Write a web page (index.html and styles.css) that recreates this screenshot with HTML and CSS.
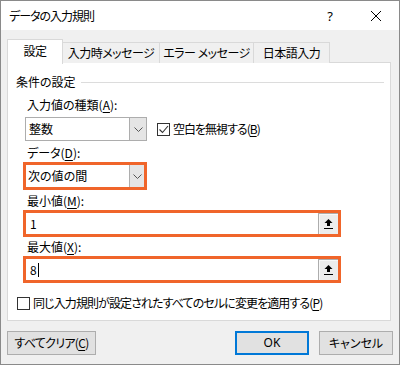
FILE: index.html
```html
<!DOCTYPE html>
<html lang="ja">
<head>
<meta charset="utf-8">
<link rel="stylesheet" href="styles.css">
</head>
<body>
<div class="dlg">
  <div class="titlebar">
    <span class="title">データの入力規則</span>
    <span class="tb-btn help">?</span>
    <span class="tb-btn close"><svg width="10" height="10" viewBox="0 0 10 10"><path d="M0 0L10 10M10 0L0 10" stroke="#000" stroke-width="1" fill="none"/></svg></span>
  </div>
  <div class="body">
    <div class="tabs">
      <div class="tab active t1">設定</div>
      <div class="tab t2">入力時メッセージ</div>
      <div class="tab t3">エラー メッセージ</div>
      <div class="tab t4">日本語入力</div>
    </div>
    <div class="panel">
      <div class="group-head"><span>条件の設定</span><div class="gline"></div></div>
      <div class="content">
        <div class="label l1">入力値の種類(<u>A</u>):</div>
        <div class="row r1">
          <div class="combo">
            <span class="ctext">整数</span>
            <span class="drop"><svg width="9" height="5" viewBox="0 0 9 5"><path d="M0.5 0.5L4.5 4.5L8.5 0.5" stroke="#555" fill="none"/></svg></span>
          </div>
          <label class="chk chk1"><span class="box"><svg width="11" height="11" viewBox="0 0 11 11"><path d="M1.5 5.5L4.5 8.5L10 2" stroke="#333" stroke-width="1.1" fill="none"/></svg></span><span class="ctxt">空白を無視する(<u>B</u>)</span></label>
        </div>
        <div class="label l2">データ(<u>D</u>):</div>
        <div class="combo orange-combo">
          <span class="ctext">次の値の間</span>
          <span class="drop"><svg width="9" height="5" viewBox="0 0 9 5"><path d="M0.5 0.5L4.5 4.5L8.5 0.5" stroke="#555" fill="none"/></svg></span>
        </div>
        <div class="label l3">最小値(<u>M</u>):</div>
        <div class="input">
          <span class="itext">1</span>
          <span class="ref"><svg width="9" height="10" viewBox="0 0 9 10"><path d="M4.5 0L8.5 4L6 4L6 7L3 7L3 4L0.5 4Z" fill="#000"/><rect x="0" y="9" width="9" height="1" fill="#000"/></svg></span>
        </div>
        <div class="label l4">最大値(<u>X</u>):</div>
        <div class="input">
          <span class="itext">8<span class="caret"></span></span>
          <span class="ref"><svg width="9" height="10" viewBox="0 0 9 10"><path d="M4.5 0L8.5 4L6 4L6 7L3 7L3 4L0.5 4Z" fill="#000"/><rect x="0" y="9" width="9" height="1" fill="#000"/></svg></span>
        </div>
      </div>
      <label class="chk chk2"><span class="box"></span><span class="ctxt">同じ入力規則が設定されたすべてのセルに変更を適用する(<u>P</u>)</span></label>
    </div>
    <div class="buttons">
      <div class="btn clear">すべてクリア(<u>C</u>)</div>
      <div class="btn ok">OK</div>
      <div class="btn cancel">キャンセル</div>
    </div>
  </div>
</div>
</body>
</html>
```

FILE: styles.css
```css
html, body {
  margin: 0;
  padding: 0;
  background: #f0f0f0;
}
body {
  font-family: "Noto Sans CJK JP", "Noto Sans", sans-serif;
  font-size: 12px;
  line-height: 16px;
  color: #000;
  font-feature-settings: "palt";
}
u {
  text-decoration: underline;
  text-underline-offset: 2px;
}
.dlg {
  width: 400px;
  height: 365px;
  box-sizing: border-box;
  border: 1px solid #8a8a8a;
  background: #f0f0f0;
}
.titlebar {
  height: 29px;
  background: #fff;
  display: flex;
  align-items: center;
}
.title {
  margin-left: 8px;
  flex: 1;
  letter-spacing: -1px;
}
.tb-btn {
  width: 46px;
  height: 29px;
  display: flex;
  align-items: center;
  justify-content: center;
}
.help {
  font-family: "Segoe UI", "Noto Sans", sans-serif;
  font-size: 13px;
  padding-top: 1px;
  box-sizing: border-box;
}
.body {
  padding-left: 6px;
}
.tabs {
  margin-top: 9px;
  height: 24px;
  display: flex;
  align-items: flex-end;
}
.tab {
  box-sizing: border-box;
  height: 21px;
  border: 1px solid #d9d9d9;
  border-bottom: none;
  background: #f0f0f0;
  display: flex;
  align-items: center;
  justify-content: center;
  margin-left: -1px;
  padding-bottom: 1px;
  letter-spacing: -0.5px;
}
.tab.active {
  height: 25px;
  margin-bottom: -1px;
  background: #fff;
  position: relative;
  z-index: 1;
  margin-left: 0;
  padding-bottom: 2px;
}
.t1 { width: 56px; }
.t2 { width: 98px; }
.t3 { width: 95px; }
.t4 { width: 77px; }
.panel {
  width: 384px;
  height: 259px;
  box-sizing: border-box;
  border: 1px solid #d9d9d9;
  margin-top: -1px;
  background: #fff;
  padding: 0 6px 0 8px;
}
.group-head {
  margin-top: 11px;
  display: flex;
  align-items: center;
}
.gline {
  flex: 1;
  height: 1px;
  background: #dcdcdc;
  margin-left: 5px;
  margin-top: 1px;
}
.content {
  padding-left: 9px;
}
.label {
  padding-left: 2px;
}
.l1 { margin-top: 7px; }
.l2 { margin-top: 4px; }
.l3 { margin-top: 3px; }
.l4 { margin-top: 2px; }
.row {
  display: flex;
  align-items: center;
}
.r1 { margin-top: 4px; }
.combo {
  width: 122px;
  height: 24px;
  box-sizing: border-box;
  border: 1px solid #adadad;
  background: #fff;
  display: flex;
  align-items: center;
}
.ctext {
  flex: 1;
  padding-left: 3px;
}
.drop {
  width: 17px;
  height: 22px;
  box-sizing: border-box;
  border-left: 1px solid #adadad;
  background: #e5e5e5;
  display: flex;
  align-items: center;
  justify-content: center;
}
.orange-combo {
  margin-top: 1px;
  margin-left: -2px;
  width: 124px;
  height: 28px;
  border: 3px solid #f0652a;
}
.orange-combo .ctext {
  padding-left: 2px;
}
.orange-combo .drop {
  width: 15px;
  height: 22px;
}
.input {
  margin-top: 1px;
  margin-left: -2px;
  width: 318px;
  height: 27px;
  box-sizing: border-box;
  border: 3px solid #f0652a;
  background: #fff;
  display: flex;
  align-items: stretch;
}
.itext {
  flex: 1;
  padding-left: 4px;
  display: flex;
  align-items: center;
}
.caret {
  display: inline-block;
  width: 1px;
  height: 14px;
  background: #000;
  margin-left: 1px;
}
.ref {
  width: 20px;
  box-sizing: border-box;
  border: 1px solid #adadad;
  border-right: none;
  border-bottom: none;
  background: #ececec;
  box-shadow: inset 1px 1px 0 #f8f8f8;
  display: flex;
  align-items: center;
  justify-content: center;
}
.chk {
  display: flex;
  align-items: center;
}
.chk1 {
  margin-left: 10px;
}
.chk1 .ctxt {
  letter-spacing: -1px;
}
.box {
  width: 13px;
  height: 13px;
  box-sizing: border-box;
  border: 1px solid #333;
  background: #fff;
  margin-right: 3px;
  display: flex;
  align-items: center;
  justify-content: center;
}
.chk2 {
  margin-top: 12px;
  margin-left: 1px;
}
.chk2 .ctxt {
  letter-spacing: -0.9px;
}
.buttons {
  margin-top: 10px;
  display: flex;
  width: 386px;
}
.btn {
  height: 24px;
  box-sizing: border-box;
  border: 1px solid #adadad;
  background: #e1e1e1;
  display: flex;
  align-items: center;
  justify-content: center;
}
.clear {
  width: 89px;
  margin-left: 0;
  letter-spacing: -0.7px;
}
.ok {
  width: 74px;
  margin-left: auto;
  border: 2px solid #0078d7;
  font-family: "Segoe UI", "Noto Sans", sans-serif;
}
.cancel {
  width: 74px;
  margin-left: 10px;
}
```
